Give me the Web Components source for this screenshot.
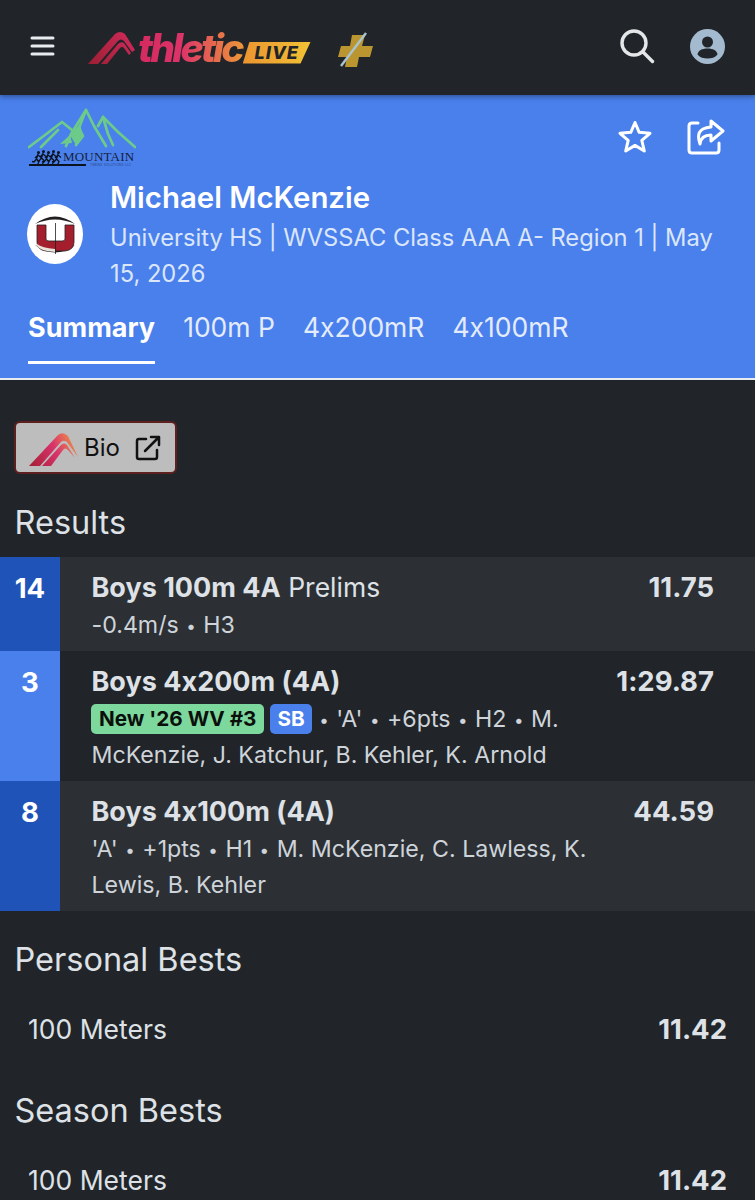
<!DOCTYPE html>
<html>
<head>
<meta charset="utf-8">
<title>Michael McKenzie</title>
<style>
  html, body { margin: 0; padding: 0; background: #212529; }
  body { font-family: Inter, "Noto Sans", sans-serif; color: #dee2e6; width: 755px; height: 1200px; overflow: hidden; }
  .d { display: inline-block; width: 11.500px; text-align: center; font-size: 17px; line-height: 1; vertical-align: 1px; }
  al-result b { font-size: 27px; }
</style>
</head>
<body>
<al-navbar></al-navbar>
<al-athlete-header name="Michael McKenzie" meta="University HS | WVSSAC Class AAA A- Region 1 | May 15, 2026"></al-athlete-header>
<al-page>
  <al-bio-button></al-bio-button>
  <al-heading>Results</al-heading>
  <al-result place="14" mark="11.75" striped>
    <span slot="title"><b>Boys 100m 4A</b> Prelims</span>
    -0.4m/s <span class="d">•</span> H3
  </al-result>
  <al-result place="3" mark="1:29.87" light tall>
    <span slot="title"><b>Boys 4x200m (4A)</b></span>
    <al-tag kind="green">New '26 WV #3</al-tag> <al-tag kind="blue">SB</al-tag> <span class="d">•</span> 'A' <span class="d">•</span> +6pts <span class="d">•</span> H2 <span class="d">•</span> M.<br>McKenzie, J. Katchur, B. Kehler, K. Arnold
  </al-result>
  <al-result place="8" mark="44.59" striped tall>
    <span slot="title"><b>Boys 4x100m (4A)</b></span>
    'A' <span class="d">•</span> +1pts <span class="d">•</span> H1 <span class="d">•</span> M. McKenzie, C. Lawless, K.<br>Lewis, B. Kehler
  </al-result>
  <al-heading class="pb">Personal Bests</al-heading>
  <al-best label="100 Meters" mark="11.42"></al-best>
  <al-heading class="sb">Season Bests</al-heading>
  <al-best label="100 Meters" mark="11.42"></al-best>
</al-page>

<script>
class AlNavbar extends HTMLElement {
  constructor() {
    super();
    this.attachShadow({ mode: 'open' });
    this.shadowRoot.innerHTML = `
      <style>
        :host { display: flex; align-items: center; height: 95px; background: #212529; box-sizing: border-box; padding: 0 30px; position: relative; z-index: 2; box-shadow: 0 2px 5px rgba(0,0,0,.35); }
        .burger { width: 25px; height: 20px; display: block; flex: none; margin-bottom: 3px; }
        .logo { display: flex; align-items: flex-end; margin-left: 33px; height: 32px; flex: none; }
        .peak { width: 50px; height: 32px; display: block; flex: none; overflow: visible; }
        .word { font: italic 800 39px/32px Inter, sans-serif; letter-spacing: -2.800px; height: 32px; padding-right: 4px;
          background: linear-gradient(90deg, #d42a60 0%, #dc3369 40%, #e5684f 70%, #ee9a37 100%); -webkit-background-clip: text; background-clip: text; color: transparent; }
        .live { display: flex; align-items: center; justify-content: center; width: 68px; height: 22px; margin-left: -3px;
          background: linear-gradient(90deg, #ea9530, #f2c235); clip-path: polygon(10% 0, 100% 0, 85% 100%, 0 100%);
          font: italic 800 18px/22px Inter, sans-serif; letter-spacing: 1px; color: #212529; }
        .plus { width: 35px; height: 35px; display: block; margin-left: 27px; margin-top: 6px; flex: none; overflow: visible; }
        .right { margin-left: auto; display: flex; align-items: center; gap: 35px; margin-bottom: 3px; }
        .right svg { display: block; }
      </style>
      <svg class="burger" viewBox="0 0 25 20">
        <g fill="none" stroke="#e9ecef" stroke-width="3" stroke-linecap="round"><path d="M2 2h21M2 10h21M2 18h21"/></g>
      </svg>
      <div class="logo">
        <svg class="peak" viewBox="0 0 50 32">
          <defs><linearGradient id="pk" gradientUnits="userSpaceOnUse" x1="0" y1="32" x2="44" y2="0"><stop offset="0" stop-color="#9c1f33"/><stop offset="1" stop-color="#cf2a5a"/></linearGradient></defs>
          <path d="M0 32H10L30 9Q33 6 36 9L44 20L47 18L37 2Q32 -2 27 2Z" fill="url(#pk)"/>
          <path d="M13 32H19L32 16Q34 14 36 16L41 23L43 21L36 11Q33 9 30 12Z" fill="url(#pk)"/>
        </svg>
        <span class="word">thletic</span>
        <span class="live">LIVE</span>
      </div>
      <svg class="plus" viewBox="0 0 35 35">
        <path d="M14 2H27L24 13H35L32 24H21L19 34H7L9 24H0L3 13H12Z" fill="#bb9530"/>
        <path d="M3 33L28 0" stroke="#a8c4d0" stroke-width="2.400"/>
      </svg>
      <div class="right">
        <svg width="36" height="36" viewBox="0 0 36 36" fill="none" stroke="#e4e6e8" stroke-linecap="round"><circle cx="15" cy="15" r="12" stroke-width="3.400"/><path d="M24 24L33.500 33.500" stroke-width="3.400"/></svg>
        <svg width="35" height="35" viewBox="0 0 35 35"><circle cx="17.500" cy="17.500" r="17.500" fill="#a3bacf"/><circle cx="17.500" cy="13" r="5.500" fill="#212529"/><path d="M7.500 25.500C8 21.500 12 19.500 17.500 19.500S27 21.500 27.500 25.500C25 28.500 21.500 29.500 17.500 29.500S10 28.500 7.500 25.500Z" fill="#212529"/></svg>
      </div>`;
  }
}
customElements.define('al-navbar', AlNavbar);

class AlAthleteHeader extends HTMLElement {
  constructor() {
    super();
    this.attachShadow({ mode: 'open' });
    this.shadowRoot.innerHTML = `
      <style>
        :host { display: block; background: #4a80ec; color: #fff; height: 285px; box-sizing: border-box; border-bottom: 2px solid #e9ecef; padding: 13px 28px 0; }
        .top { display: flex; justify-content: space-between; align-items: flex-start; height: 60px; }
        .mountain { display: block; position: relative; width: 108px; height: 60px; }
        .mountain svg { position: absolute; left: 0; top: 0; }
        .brand { position: absolute; left: 35px; top: 42px; font: 13px/14px "Liberation Serif", serif; letter-spacing: .2px; color: #14213d; white-space: nowrap; }
        .sub { position: absolute; left: 62px; top: 55px; font: 3px/4px Inter, sans-serif; letter-spacing: .3px; color: #27407c; white-space: nowrap; }
        .actions { display: flex; gap: 34px; margin-top: 11px; margin-right: 2.500px; }
        .actions svg { display: block; }
        .who { display: flex; align-items: flex-start; margin-top: 8px; }
        .crest { width: 56px; height: 60px; flex: none; display: block; margin-top: 28px; margin-left: -1px; }
        .text { margin-left: 27px; }
        h1 { margin: 0; font: 600 29.400px/44px Inter, sans-serif; }
        p { margin: 0; font: 400 23.700px/36px Inter, sans-serif; color: #dbe6fb; }
        nav { display: flex; align-items: baseline; gap: 28px; margin-top: 17px; }
        nav span { font: 400 26.500px/36px Inter, sans-serif; font-feature-settings: "calt" 0; color: #e4ecfc; }
        nav span.on { font-size: 27px; font-weight: 700; color: #fff; padding-bottom: 15px; border-bottom: 3px solid #fff; }
      </style>
      <div class="top">
        <div class="mountain">
          <svg width="108" height="60" viewBox="0 0 108 60">
            <defs>
              <g id="runner">
                <circle cx="3.500" cy="1.500" r="1.500" fill="#0c1320"/>
                <path d="M3 3L1.500 8L4 10.500L2.500 14M1.500 8L-1 11L-3 10.500M3 4L6 6.500M3 4L0 7" fill="none" stroke="#0c1320" stroke-width="1.300"/>
              </g>
            </defs>
            <g fill="none" stroke="#6dcb8a" stroke-width="2.700" stroke-linejoin="round" stroke-linecap="round">
              <path d="M1 39L17 27L34 14L44 22"/>
              <path d="M13 39L30 22"/>
              <path d="M38 38L43 26L58 2L66 18L72 28L78 38"/>
              <path d="M58 2L51 20L55 28L48 37"/>
              <path d="M70 18L75 9L90 24L107 39"/>
              <path d="M75 9L80 26L85 37"/>
            </g>
            <path d="M42 27L52 16L55 28L48 37Z M32 36L42 27L44 35Z" fill="#6dcb8a"/>
            <use href="#runner" x="7" y="43"/>
            <use href="#runner" x="12" y="42"/>
            <use href="#runner" x="17" y="43"/>
            <use href="#runner" x="22" y="42"/>
            <use href="#runner" x="27" y="43"/>
            <path d="M1 57H58" stroke="#0c1320" stroke-width="1.800"/>
          </svg>
          <span class="brand">MOUNTAIN</span>
          <span class="sub">TIMING SOLUTIONS LLC</span>
        </div>
        <div class="actions">
          <svg width="36" height="36" viewBox="0 0 36 36" fill="none" stroke="#fff" stroke-width="3" stroke-linejoin="round"><path d="M18 3.500L22.200 13.300L33 14.300L24.800 21.400L27.300 32L18 26.400L8.700 32L11.200 21.400L3 14.300L13.800 13.300Z"/></svg>
          <svg width="38" height="36" viewBox="0 0 38 36" fill="none" stroke="#fff" stroke-width="3" stroke-linecap="round" stroke-linejoin="round"><path d="M11 4H5Q2 4 2 7V31Q2 34 5 34H29Q32 34 32 31V24"/><path d="M24 2L36 12L24 22V16Q14 16 13 25Q9 14 16 10Q19 8.500 24 8Z"/></svg>
        </div>
      </div>
      <div class="who">
        <svg class="crest" viewBox="0 0 56 60">
          <ellipse cx="28" cy="30" rx="28" ry="30" fill="#fff"/>
          <path d="M8 20Q28 5 48 20Q28 11 8 20Z" fill="#231f20"/>
          <path d="M8 41Q28 56 48 41Q28 50 8 41Z" fill="#231f20"/>
          <path d="M10 21H19V35Q19 37 22 37H35Q38 37 38 35V21H47V38Q47 46 38 47H19Q10 46 10 38Z" fill="#a51e2d" stroke="#231f20" stroke-width=".800"/>
          <path d="M10 40Q15 44 28 45V48Q13 47 10 42Z" fill="#e8e4dc"/>
          <path d="M28.500 19V50" stroke="#231f20" stroke-width=".800"/>
        </svg>
        <div class="text">
          <h1></h1>
          <p></p>
        </div>
      </div>
      <nav><span class="on">Summary</span><span>100m P</span><span>4x200mR</span><span>4x100mR</span></nav>`;
    this.shadowRoot.querySelector('h1').textContent = this.getAttribute('name');
    this.shadowRoot.querySelector('p').textContent = this.getAttribute('meta');
  }
}
customElements.define('al-athlete-header', AlAthleteHeader);

class AlPage extends HTMLElement {
  constructor() {
    super();
    this.attachShadow({ mode: 'open' });
    this.shadowRoot.innerHTML = `
      <style>
        :host { display: block; padding-top: 41px; }
      </style>
      <slot></slot>`;
  }
}
customElements.define('al-page', AlPage);

class AlBioButton extends HTMLElement {
  constructor() {
    super();
    this.attachShadow({ mode: 'open' });
    this.shadowRoot.innerHTML = `
      <style>
        :host { display: flex; align-items: center; width: 163px; height: 53px; box-sizing: border-box; margin-left: 14px; background: #bdbdbd; border: 2px solid #5e1f1f; border-radius: 6px; color: #111; padding-left: 13px; font: 400 24px/1 Inter, sans-serif; }
        svg { display: block; flex: none; }
        .mark { margin-right: 5px; }
        .ext { margin-left: 15px; }
      </style>
      <svg class="mark" width="50" height="36" viewBox="0 0 50 36">
        <defs><linearGradient id="bm" gradientUnits="userSpaceOnUse" x1="0" y1="36" x2="50" y2="10"><stop offset="0" stop-color="#a31f35"/><stop offset=".55" stop-color="#d9336b"/><stop offset="1" stop-color="#ef9d45"/></linearGradient></defs>
        <path d="M0 36H11L31 13Q34 9 38 12L49 27L39 6Q34 1 29 5Z" fill="url(#bm)"/>
        <path d="M13 36H22L34 20Q36 17 39 20L46 28L38 15Q35 12 32 15Z" fill="url(#bm)"/>
      </svg>
      <span>Bio</span>
      <svg class="ext" width="26" height="26" viewBox="0 0 26 26" fill="none" stroke="#111" stroke-width="2.500" stroke-linecap="round" stroke-linejoin="round"><path d="M11 4H4Q2 4 2 6V22Q2 24 4 24H20Q22 24 22 22V15"/><path d="M10 16L24 2M16 2H24V10"/></svg>`;
  }
}
customElements.define('al-bio-button', AlBioButton);

class AlHeading extends HTMLElement {
  constructor() {
    super();
    this.attachShadow({ mode: 'open' });
    this.shadowRoot.innerHTML = `
      <style>
        :host { display: block; font: 400 32.500px/36px Inter, sans-serif; color: #dee2e6; padding: 31px 15px 16px 14.500px; }
        :host(.pb) { padding: 31px 15px 33px 14.500px; }
        :host(.sb) { padding: 46px 15px 33px 14.500px; }
      </style>
      <slot></slot>`;
  }
}
customElements.define('al-heading', AlHeading);

class AlResult extends HTMLElement {
  constructor() {
    super();
    this.attachShadow({ mode: 'open' });
    this.shadowRoot.innerHTML = `
      <style>
        :host { display: flex; height: 94px; background: transparent; color: #dee2e6; }
        :host([tall]) { height: 130px; }
        :host([striped]) { background: #2c3035; }
        .place { width: 60px; flex: none; box-sizing: border-box; background: #1f53b8; color: #fff; font: 700 27.500px/30px Inter, sans-serif; text-align: center; padding-top: 16px; }
        :host([light]) .place { background: #4a80ec; }
        .body { flex: 1; min-width: 0; padding: 12px 41px 0 31.500px; }
        .line { display: flex; justify-content: space-between; font: 400 26.500px/36px Inter, sans-serif; font-feature-settings: "calt" 0; }
        .mark { font-size: 27.500px; font-weight: 700; }
        .detail { margin-top: 1px; font: 400 23.200px/36px Inter, sans-serif; font-feature-settings: "calt" 0; color: #ced4da; white-space: nowrap; }
      </style>
      <div class="place"></div>
      <div class="body">
        <div class="line"><slot name="title"></slot><span class="mark"></span></div>
        <div class="detail"><slot></slot></div>
      </div>`;
    this.shadowRoot.querySelector('.place').textContent = this.getAttribute('place');
    this.shadowRoot.querySelector('.mark').textContent = this.getAttribute('mark');
  }
}
customElements.define('al-result', AlResult);

class AlTag extends HTMLElement {
  constructor() {
    super();
    this.attachShadow({ mode: 'open' });
    this.shadowRoot.innerHTML = `
      <style>
        :host { display: inline-block; font: 700 20.700px/30px Inter, sans-serif; padding: 0 8px; border-radius: 5px; margin-left: -.5px; vertical-align: 1px; }
        :host([kind="green"]) { background: #7dd89d; color: #0b0f0c; }
        :host([kind="blue"]) { background: #4a80ec; color: #fff; padding: 0 7px; }
      </style>
      <slot></slot>`;
  }
}
customElements.define('al-tag', AlTag);

class AlBest extends HTMLElement {
  constructor() {
    super();
    this.attachShadow({ mode: 'open' });
    this.shadowRoot.innerHTML = `
      <style>
        :host { display: flex; justify-content: space-between; padding: 0 28px; font: 400 26.500px/36px Inter, sans-serif; color: #dee2e6; }
        b { font-size: 27.500px; font-weight: 700; }
      </style>
      <span></span><b></b>`;
    this.shadowRoot.querySelector('span').textContent = this.getAttribute('label');
    this.shadowRoot.querySelector('b').textContent = this.getAttribute('mark');
  }
}
customElements.define('al-best', AlBest);
</script>
</body>
</html>
